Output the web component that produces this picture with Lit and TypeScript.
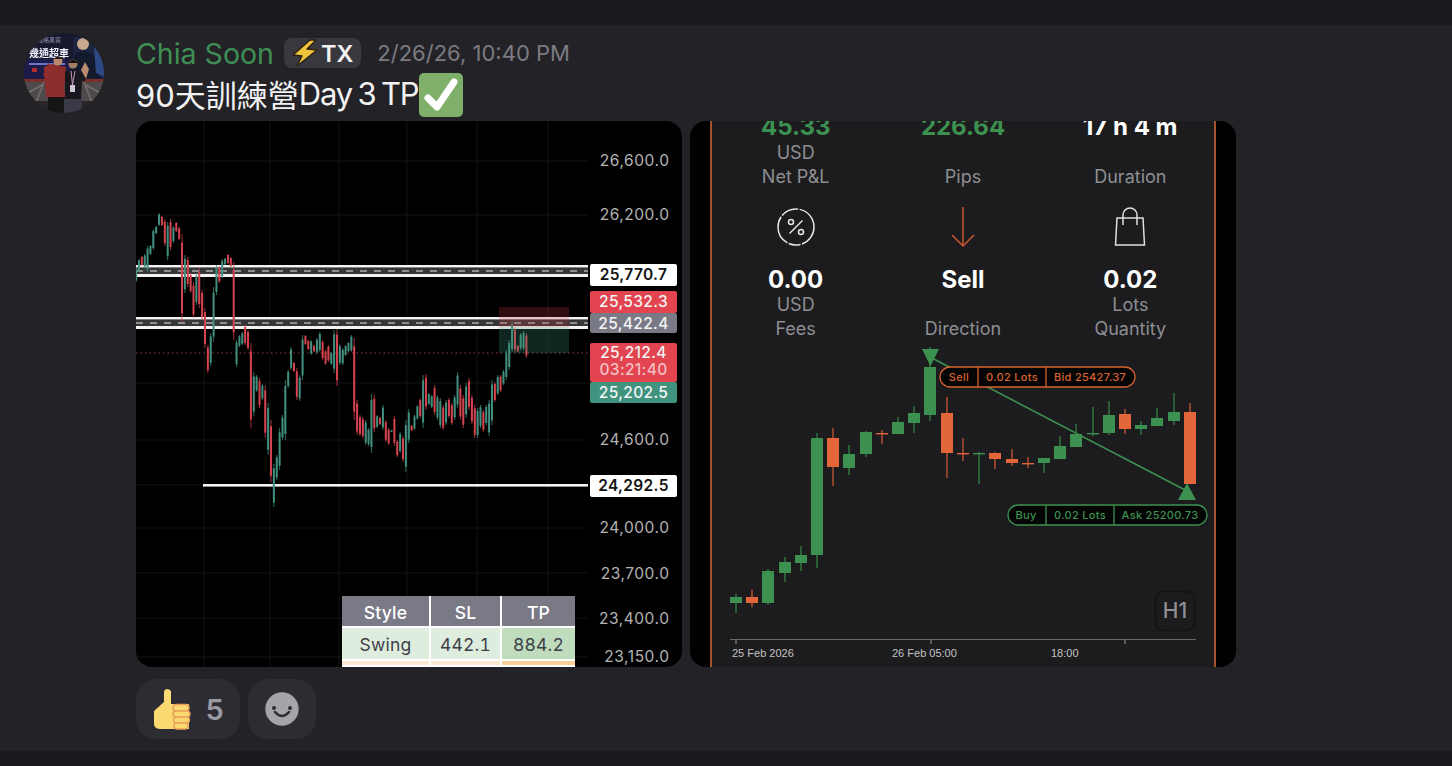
import {LitElement, html, svg, css} from 'lit';
import {customElement} from 'lit/decorators.js';

// hi-lo and colour of each candle of the left chart, in page pixels, left to right
const LEFT_CANDLES = `268-282g 259-272g 256-266r 254-268g 246-272g 245-255g 229-250g 226-234g 213-226g 216-226r
219-246r 222-260g 219-250r 226-243g 222-232r 227-240r 234-322r 255-293g 257-287r 273-293r
282-318r 273-305g 268-308r 290-320r 308-348r 345-373r 333-366g 287-342g 265-295g 266-283r
259-278g 258-265g 254-264r 257-267r 262-340r 340-367g 335-347g 332-345g 325-345r 330-350r
343-428r 372-416g 375-392g 378-408r 384-400g 385-438r 403-455g 420-482r 464-507g 455-480g
428-470g 415-440g 380-440g 370-388g 347-370g 362-372r 368-400r 375-401g 335-380g 335-345r
340-350r 340-355g 345-352r 338-354g 332-352g 340-360r 350-365r 345-362r 352-365g 330-373g
329-386r 344-365g 348-365g 345-356g 342-352g 335-352g 338-420r 400-435r 415-436r 417-438r
420-445g 428-446g 394-453g 395-432r 415-428g 417-425r 405-430g 420-442r 428-445r 430-432g
416-446r 440-457r 432-453g 436-462r 420-472g 409-443g 425-431r 415-430g 405-420g 398-418r
375-428g 374-410r 393-405g 395-408g 385-415r 395-420g 398-428g 405-430r 400-425g 398-418r
403-425r 395-420g 372-408g 385-420r 395-428r 383-418g 378-410r 395-424r 405-438r 408-438g
405-428g 410-432r 405-425g 400-436g 380-425g 382-402r 375-395g 375-392r 370-385g 350-380g
340-370g 321-352g 327-352r 345-352r 333-350g 331-350g 333-358r`.trim().split(/\s+/);

// x, body top, body bottom, wick top, wick bottom, colour
const RIGHT_CANDLES: [number, number, number, number, number, string][] = [
  [736, 597, 603, 594, 613, 'g'], [752, 597, 603, 590, 607, 'r'], [768, 571, 603, 569, 605, 'g'],
  [785, 562, 573, 557, 582, 'g'], [801, 555, 563, 546, 571, 'g'], [817, 438, 555, 433, 568, 'g'],
  [833, 438, 467, 428, 486, 'r'], [849, 454, 468, 445, 475, 'g'], [866, 432, 454, 431, 457, 'g'],
  [882, 433, 434, 430, 444, 'r'], [898, 422, 434, 417, 434, 'g'], [914, 413, 423, 406, 433, 'g'],
  [930, 367, 415, 347, 421, 'g'], [947, 413, 453, 397, 478, 'r'], [963, 453, 454, 438, 461, 'r'],
  [979, 453, 454, 452, 484, 'g'], [995, 453, 459, 452, 469, 'r'], [1012, 459, 463, 449, 466, 'r'],
  [1028, 463, 464, 457, 468, 'r'], [1044, 458, 463, 458, 473, 'g'], [1060, 446, 459, 436, 459, 'g'],
  [1076, 434, 447, 424, 447, 'g'], [1093, 433, 434, 407, 436, 'g'], [1109, 415, 433, 401, 435, 'g'],
  [1125, 414, 429, 409, 434, 'r'], [1141, 425, 429, 421, 435, 'g'], [1157, 418, 426, 408, 426, 'g'],
  [1174, 412, 421, 393, 425, 'g'], [1190, 412, 484, 403, 484, 'r'],
];

const GRID_X = [204, 270, 339, 407, 477, 548];
const GRID_Y = [161, 215, 383, 440, 485, 528, 573, 618, 657];
const AXIS = [['26,600.0', 160], ['26,200.0', 214], ['24,600.0', 439], ['24,000.0', 527], ['23,700.0', 573], ['23,400.0', 618], ['23,150.0', 656]] as const;

@customElement('trade-chart')
export class TradeChart extends LitElement {
  static styles = css`
    :host {
      display: block;
      position: relative;
      width: 546px;
      height: 546px;
      background: #000;
      border-radius: 16px;
      overflow: hidden;
      font-family: Inter, "Liberation Sans", sans-serif;
    }

    svg {
      display: block;
    }

    .soft {
      filter: blur(.35px);
    }

    .axis {
      font-size: 15.5px;
      letter-spacing: .55px;
      fill: #b4b4b4;
    }

    .tag {
      font-size: 15.5px;
      font-weight: 500;
      letter-spacing: .35px;
      fill: #f4f4f4;
    }

    .tag--dark {
      fill: #111;
      font-weight: 600;
    }

    .tag--dim {
      fill: #f3c0c4;
    }

    .levels {
      position: absolute;
      left: 206px;
      bottom: 0;
      width: 233px;
      height: 71px;
      display: grid;
      grid-template-columns: 89px 71px 73px;
      grid-template-rows: 32px 33px 6px;
      font-size: 17.5px;
      letter-spacing: .2px;
      font-variant-numeric: tabular-nums;
      color: #3d4049;
      text-align: center;
    }

    .levels div {
      display: flex;
      align-items: center;
      justify-content: center;
      border-right: 2px solid #fff;
      border-bottom: 2px solid #fff;
      box-sizing: border-box;
      padding-top: 2px;
    }

    .levels div:nth-child(3n) {
      border-right: 0;
    }

    .head {
      background: #7a7a87;
      color: #fff;
      font-weight: 500;
    }

    .swing {
      background: #deeddd;
    }

    .swing--tp {
      background: #bfdcbc;
    }

    .next {
      background: #fde9d2;
    }

    .next--tp {
      background: #fbd199;
    }
  `;

  band(top: number) {
    return svg`
      <rect x="136" y=${top} width="452" height="12" fill="#363636"/>
      <rect x="136" y=${top} width="452" height="2.4" fill="#f2f2f2"/>
      <rect x="136" y=${top + 9} width="452" height="3" fill="#f2f2f2"/>
      <line x1="136" x2="588" y1=${top + 6} y2=${top + 6} stroke="#e8e8e8" stroke-width="1" stroke-dasharray="7 7"/>
    `;
  }

  tag(y: number, h: number, fill: string, label: string, dark = false) {
    return svg`
      <rect x="590" y=${y} width="87" height=${h} rx="2" fill=${fill}/>
      <text class="tag ${dark ? 'tag--dark' : ''}" x="633.5" y=${y + 16}  text-anchor="middle">${label}</text>
    `;
  }

  render() {
    return html`
      <svg width="546" height="546" viewBox="136 121 546 546">
        ${GRID_X.map(x => svg`<line x1=${x} x2=${x} y1="121" y2="667" stroke="#131313"/>`)}
        ${GRID_Y.map(y => svg`<line x1="136" x2="588" y1=${y} y2=${y} stroke="#131313"/>`)}
        ${this.band(265)}
        ${this.band(317)}
        <rect x="203" y="484" width="385" height="2.6" fill="#f2f2f2"/>
        <line x1="136" x2="588" y1="353" y2="353" stroke="#9c3a3e" stroke-dasharray="1.5 3"/>
        <g class="soft">
          ${LEFT_CANDLES.map((c, i) => {
            const [hi, lo] = c.slice(0, -1).split('-').map(Number);
            const color = c.endsWith('g') ? '#41907f' : '#d5434f';
            const x = 136.1 + i * 2.87;
            const inset = (lo - hi) * 0.1;
            return svg`
              <line x1=${x} x2=${x} y1=${hi} y2=${lo} stroke=${color} stroke-opacity=".75"/>
              <rect x=${x - 1} y=${hi + inset} width="2" height=${lo - hi - inset * 2} fill=${color}/>
            `;
          })}
        </g>
        <rect x="499" y="307" width="70" height="20" fill="#c83c44" fill-opacity=".24"/>
        <rect x="499" y="327" width="70" height="26" fill="#3f9a83" fill-opacity=".24"/>
        ${AXIS.map(([label, y]) => svg`<text class="axis" x="669.500" y=${y + 5.5} text-anchor="end">${label}</text>`)}
        ${this.tag(264, 22, '#ffffff', '25,770.7', true)}
        ${this.tag(291, 22, '#e2454f', '25,532.3')}
        ${this.tag(313, 20, '#7a7a87', '25,422.4')}
        <rect x="590" y="343" width="87" height="39" rx="2" fill="#e2454f"/>
        <text class="tag" x="633.5" y="358" text-anchor="middle">25,212.4</text>
        <text class="tag tag--dim" x="633.5" y="375" text-anchor="middle">03:21:40</text>
        ${this.tag(382, 21, '#40937f', '25,202.5')}
        ${this.tag(475, 22, '#ffffff', '24,292.5', true)}
      </svg>
      <div class="levels">
        <div class="head">Style</div><div class="head">SL</div><div class="head">TP</div>
        <div class="swing">Swing</div><div class="swing">442.1</div><div class="swing--tp">884.2</div>
        <div class="next"></div><div class="next"></div><div class="next--tp"></div>
      </div>
    `;
  }
}

@customElement('trade-summary')
export class TradeSummary extends LitElement {
  static styles = css`
    :host {
      display: block;
      width: 546px;
      height: 546px;
      background: #000;
      border-radius: 16px;
      overflow: hidden;
      font-family: Inter, "Liberation Sans", sans-serif;
    }

    .panel {
      box-sizing: border-box;
      width: 506px;
      height: 546px;
      margin-left: 20px;
      background: #1c1c1e;
      border-left: 2px solid #a5532f;
      border-right: 2px solid #a5532f;
      overflow: hidden;
    }

    .stats {
      display: grid;
      grid-template-columns: repeat(3, 1fr);
      margin-top: -7px;
      text-align: center;
    }

    .stat {
      display: flex;
      flex-direction: column;
      align-items: center;
    }

    .icon {
      box-sizing: border-box;
      height: 78px;
      padding-bottom: 2px;
      display: flex;
      align-items: center;
      justify-content: center;
    }

    .value {
      height: 26px;
      font-size: 24px;
      line-height: 26px;
      font-weight: 700;
      color: #fff;
    }

    .value--up {
      color: #3d9150;
    }

    .unit, .label {
      height: 24px;
      font-size: 18px;
      line-height: 24px;
      color: #8e8e93;
    }

    .unit {
      margin-top: 1px;
    }

    .stat:nth-child(n+4) .unit {
      margin-top: 0;
    }

    .chart {
      display: block;
      margin-top: 4px;
    }

    .chart text {
      font-family: Inter, "Liberation Sans", sans-serif;
    }

    .order {
      font-size: 11px;
      font-weight: 500;
      letter-spacing: .3px;
      text-anchor: middle;
    }

    .chart .time {
      font-family: "Liberation Sans", sans-serif;
      font-size: 11px;
      fill: #c4c4c4;
    }

    .h1 {
      font-size: 21px;
      font-weight: 500;
      fill: #8e8e93;
      text-anchor: middle;
    }
  `;

  order(x: number, w: number, y: number, color: string, seps: number[], labels: [string, number][]) {
    return svg`
      <rect x=${x} y=${y} width=${w} height="20" rx="10" fill="#050505" stroke=${color} stroke-width="1.3"/>
      ${seps.map(s => svg`<line x1=${s} x2=${s} y1=${y} y2=${y + 20} stroke=${color} stroke-width="1.3"/>`)}
      ${labels.map(([t, lx]) => svg`<text class="order" x=${lx} y=${y + 14} fill=${color}>${t}</text>`)}
    `;
  }

  render() {
    const green = '#3d9150';
    const red = '#e2663a';
    return html`
      <div class="panel">
        <div class="stats">
          <div class="stat"><div class="value value--up">45.33</div><div class="unit">USD</div><div class="label">Net P&amp;L</div></div>
          <div class="stat"><div class="value value--up">226.64</div><div class="unit"></div><div class="label">Pips</div></div>
          <div class="stat"><div class="value">17 h 4 m</div><div class="unit"></div><div class="label">Duration</div></div>
          <div class="stat">
            <div class="icon">
              <svg width="40" height="40" viewBox="0 0 40 40" fill="none" stroke="#e6e6e6" stroke-width="1.5">
                <circle cx="20" cy="20" r="18" stroke-dasharray="22 1.5 12 1.5 30 1.5 18 1.5 26 1.5"/>
                <line x1="13.5" y1="26.5" x2="26.5" y2="13.5"/>
                <circle cx="15" cy="15" r="2.5"/>
                <circle cx="25" cy="25" r="2.5"/>
              </svg>
            </div>
            <div class="value">0.00</div><div class="unit">USD</div><div class="label">Fees</div>
          </div>
          <div class="stat">
            <div class="icon">
              <svg width="24" height="42" viewBox="0 0 24 42" fill="none" stroke="#c9572f" stroke-width="1.5">
                <line x1="12" y1="1" x2="12" y2="40"/>
                <polyline points="1,29 12,40 23,29"/>
              </svg>
            </div>
            <div class="value">Sell</div><div class="unit"></div><div class="label">Direction</div>
          </div>
          <div class="stat">
            <div class="icon">
              <svg width="32" height="40" viewBox="0 0 32 40" fill="none" stroke="#e0e0e0" stroke-width="1.5">
                <polygon points="3,11 29,11 30.5,38 1.5,38"/>
                <path d="M9 18V8a7 7 0 0 1 14 0V18"/>
              </svg>
            </div>
            <div class="value">0.02</div><div class="unit">Lots</div><div class="label">Quantity</div>
          </div>
        </div>
        <svg class="chart" width="502" height="322" viewBox="712 345 502 322">
          <line x1="930" y1="357" x2="1187" y2="491" stroke=${green} stroke-width="1.6"/>
          ${RIGHT_CANDLES.map(([x, top, bottom, hi, lo, c]) => {
            const color = c === 'g' ? green : red;
            return svg`
              <line x1=${x} x2=${x} y1=${hi} y2=${lo} stroke=${c === 'g' ? '#2f7a41' : '#b9532e'} stroke-width="1.4"/>
              <rect x=${x - 6} y=${top} width="12" height=${Math.max(bottom - top, 1.4)} fill=${color}/>
            `;
          })}
          <polygon points="922,349 939,349 930.5,366" fill=${green}/>
          <polygon points="1187,483 1178,500 1196,500" fill=${green}/>
          ${this.order(940, 195, 367, '#d8632f', [978, 1046], [['Sell', 959], ['0.02 Lots', 1012], ['Bid 25427.37', 1090]])}
          ${this.order(1008, 199, 505, green, [1046, 1114], [['Buy', 1026], ['0.02 Lots', 1080], ['Ask 25200.73', 1160]])}
          <rect x="1155.5" y="591.5" width="39" height="39" rx="8" fill="#1c1c1e" stroke="#131315" stroke-width="1.5"/>
          <text class="h1" x="1175" y="618">H1</text>
          <line x1="730" x2="1196" y1="639.5" y2="639.5" stroke="#6a6a6c"/>
          ${[736, 931, 1125].map(x => svg`<line x1=${x} x2=${x} y1="640" y2="644" stroke="#9a9a9c"/>`)}
          <text class="time" x="732" y="657">25 Feb 2026</text>
          <text class="time" x="892" y="657">26 Feb 05:00</text>
          <text class="time" x="1051" y="657">18:00</text>
        </svg>
      </div>
    `;
  }
}

@customElement('app-root')
export class AppRoot extends LitElement {
  static styles = css`
    :host {
      display: block;
      width: 1452px;
      height: 766px;
      box-sizing: border-box;
      padding: 25px 0 15px;
      background: #1a1a1e;
      overflow: hidden;
      font-family: Inter, "Noto Sans CJK TC", sans-serif;
    }

    .message {
      height: 726px;
      box-sizing: border-box;
      padding: 8px 24px 0;
      background: #232327;
      display: flex;
      gap: 32px;
    }

    .avatar {
      flex: none;
      width: 80px;
      height: 80px;
      border-radius: 50%;
      overflow: hidden;
    }

    .avatar svg {
      display: block;
      filter: blur(.6px);
    }

    .body {
      display: flex;
      flex-direction: column;
      align-items: flex-start;
    }

    .header {
      display: flex;
      align-items: center;
      height: 36px;
      margin-top: 2px;
    }

    .name {
      font-size: 28.5px;
      color: #3f8f55;
    }

    .role {
      display: flex;
      align-items: center;
      height: 30px;
      margin-left: 10px;
      padding: 0 8px 0 5px;
      background: #38383e;
      border-radius: 8px;
      font-size: 23.5px;
      font-weight: 600;
      color: #f2f2f2;
    }

    .time {
      margin-left: 16px;
      font-size: 22px;
      color: #7b7b82;
    }

    .text {
      display: flex;
      align-items: center;
      height: 44px;
      padding-top: 1px;
      box-sizing: border-box;
      font-size: 31px;
      color: #f2f2f3;
      white-space: nowrap;
    }

    .latin {
      letter-spacing: -1.2px;
      word-spacing: -2px;
    }

    .text svg {
      flex: none;
      margin: 3px 0 0 1px;
    }

    .images {
      display: flex;
      gap: 8px;
      margin-top: 6px;
    }

    .reactions {
      display: flex;
      gap: 8px;
      margin-top: 12px;
    }

    .chip {
      display: flex;
      align-items: center;
      justify-content: center;
      height: 60px;
      background: #2c2c32;
      border-radius: 20px;
    }

    .chip--count {
      width: 104px;
      gap: 13px;
      font-size: 29px;
      font-weight: 600;
      color: #9a9aa2;
    }

    .chip--add {
      width: 68px;
    }
  `;

  render() {
    return html`
      <div class="message">
        <div class="avatar">
          <svg width="80" height="80" viewBox="0 0 80 80">
            <rect width="80" height="80" fill="#18182e"/>
            <rect y="26" width="80" height="20" fill="#1d1c48"/>
            <path d="M50 4 h22 l8 14 v32 h-34 z" fill="#1c2440"/>
            <circle cx="59" cy="11" r="6" fill="#c8a78e"/>
            <path d="M50 22 q10 -8 22 2 l6 26 h-30 z" fill="#141a2e"/>
            <path d="M70 14 l10 10 v20 l-8 -4 z" fill="#2e4a86"/>
            <text x="13" y="9" font-size="6" fill="#8b8ca8" font-family="Noto Sans CJK TC">戰略黑客</text>
            <text x="5" y="24" font-size="10" font-weight="700" fill="#eef1ff" font-family="Noto Sans CJK TC">幾通超車</text>
            <rect x="5" y="30" width="36" height="2" fill="#6d73c8"/>
            <rect x="8" y="35" width="5" height="4" fill="#b02a2a"/>
            <rect y="46" width="80" height="3" fill="#7a2f2a"/>
            <rect y="49" width="80" height="31" fill="#4f4a4c"/>
            <path d="M0 62 L18 52 M62 52 L80 62 M20 49 L8 80 M60 49 L72 80" stroke="#77706f" stroke-width="1.5"/>
            <rect y="68" width="80" height="12" fill="#2a2628"/>
            <path d="M20 42 L20 34 L28 31 L42 34 L40 56 L44 64 L22 64 Z" fill="#8d2c2c"/>
            <path d="M19 42 L24 30 L28 33 L24 46 Z" fill="#922f2d"/>
            <rect x="24" y="64" width="18" height="16" fill="#151518"/>
            <circle cx="34" cy="28" r="4.5" fill="#b98b6e"/>
            <path d="M30 26 q4 -5 8 0 z" fill="#1a1214"/>
            <path d="M41 39 L48 37 L56 37 L62 46 L60 49 L58 47 L57 66 L41 66 Z" fill="#17171d"/>
            <path d="M57 37 L62 46 L65 36 L61 29 Z" fill="#b98b6e"/>
            <rect x="40" y="66" width="18" height="14" fill="#393947"/>
            <circle cx="49" cy="31" r="4.5" fill="#a67c62"/>
            <path d="M44 30 q5 -7 10 0 z" fill="#111"/>
            <path d="M47 38 L48.500 52 L51 38" fill="none" stroke="#c89ab8" stroke-width="1"/>
            <rect x="46" y="52" width="5" height="7" fill="#cfc3d8"/>
          </svg>
        </div>
        <div class="body">
          <div class="header">
            <span class="name">Chia Soon</span>
            <span class="role">
              <svg width="32" height="30" viewBox="0 0 32 30">
                <path d="M21 2 L4 17 L13 18 L8 28 L28 12 L18 11 L27 2 Z" fill="#f2c33c" stroke="#2a2210" stroke-width="1.4" stroke-linejoin="round"/>
              </svg>TX</span>
            <span class="time">2/26/26, 10:40 PM</span>
          </div>
          <div class="text"><span>90天訓練營</span><span class="latin">Day 3 TP</span><svg width="44" height="44" viewBox="0 0 44 44">
              <rect width="44" height="44" rx="5" fill="#7fb069"/>
              <polyline points="9,25 18,34 35,9" fill="none" stroke="#fff" stroke-width="7" stroke-linecap="round" stroke-linejoin="round"/>
            </svg></div>
          <div class="images">
            <trade-chart></trade-chart>
            <trade-summary></trade-summary>
          </div>
          <div class="reactions">
            <div class="chip chip--count">
              <svg width="40" height="44" viewBox="151 687 40 44">
                <path d="M153 711 L163 702 L163 691 Q166 687 170 691 L170 704 L188 704 L188 729 L160 729 Q153 729 153 724 Z" fill="#fbd971"/>
                <g fill="#fbd971" stroke="#e8a15d" stroke-width="1.4">
                  <rect x="172" y="704.500" width="16" height="6.500" rx="3"/>
                  <rect x="172" y="711" width="17" height="6" rx="3"/>
                  <rect x="172.500" y="717" width="16" height="6" rx="3"/>
                  <rect x="173" y="723" width="14" height="6" rx="3"/>
                </g>
              </svg>
              <span>5</span>
            </div>
            <div class="chip chip--add">
              <svg width="34" height="34" viewBox="0 0 34 34">
                <circle cx="17" cy="17" r="16.700" fill="#a4a4ab"/>
                <circle cx="9" cy="16" r="2" fill="#2c2c32"/>
                <circle cx="25" cy="16" r="2" fill="#2c2c32"/>
                <path d="M10 20 Q17 28 24 20" fill="none" stroke="#2c2c32" stroke-width="2.500" stroke-linecap="round"/>
              </svg>
            </div>
          </div>
        </div>
      </div>
    `;
  }
}
